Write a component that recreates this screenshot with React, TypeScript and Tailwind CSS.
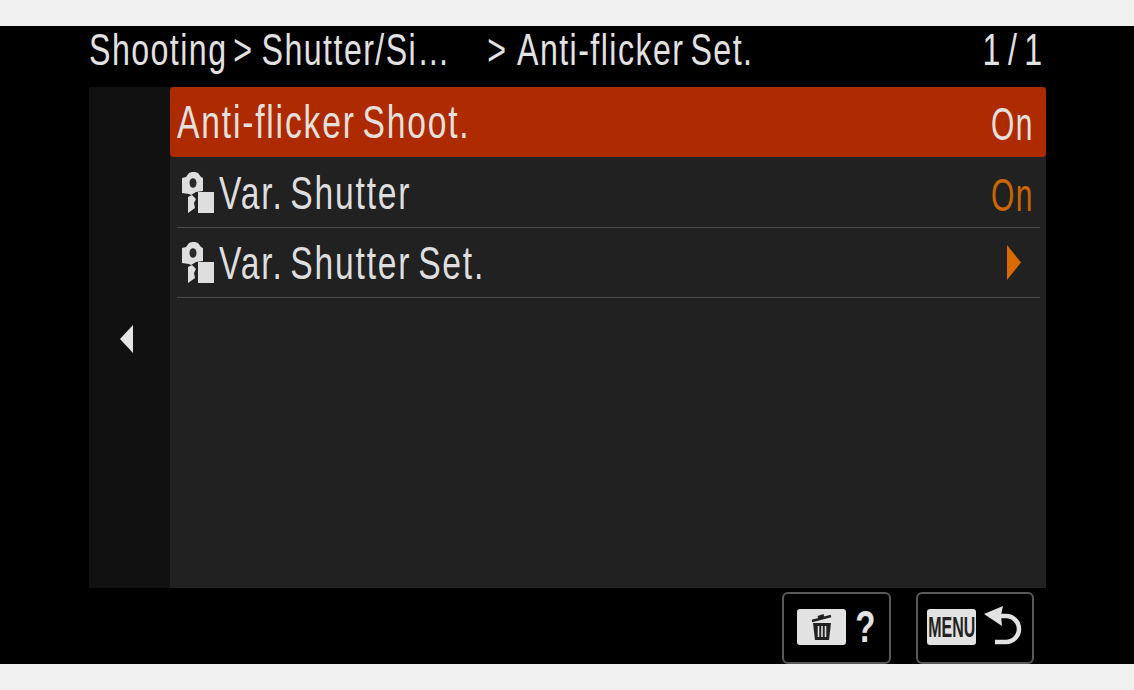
const font = "font-['Liberation_Sans',Arial,sans-serif]"
const rowText = 'text-[46px] leading-none inline-block scale-x-[0.73] tracking-[2.5px] [word-spacing:-6px] whitespace-nowrap'
const valueText = 'text-[46px] leading-none inline-block scale-x-[0.65] tracking-[2.3px] origin-right pt-[4px]'

function CameraFileIcon() {
  return (
    <svg width="34" height="42" viewBox="0 0 34 42" className="shrink-0">
      <path fill="#dedede" d="M1 6l4-1 3-4 3-1h3l3 1 3 4 2 1v13l-7 1-5 3-2-1-7-1z" />
      <ellipse cx="12" cy="11" rx="3.500" ry="4.800" fill="#2a2a2a" />
      <path fill="#dedede" d="M7 25l4-2 4 4-2 4 1 5-7 5z" />
      <path fill="#dedede" d="M17 20h16v21H17z" />
    </svg>
  )
}

function Row({ label, value, selected, icon, arrow }: { label: string; value?: string; selected?: boolean; icon?: boolean; arrow?: boolean }) {
  if (selected) {
    return (
      <div className="h-[70px] mb-px flex items-center justify-between bg-[#ae2a00] rounded-[4px] pl-[7px] pr-[12px] text-[#e4e0de]">
        <span className={`${rowText} origin-left`}>{label}</span>
        <span className={valueText}>{value}</span>
      </div>
    )
  }
  return (
    <div className="h-[70px] ml-[7px] mr-[6px] flex items-center justify-between border-b border-[#4a4a4a] pr-[6px]">
      <div className="flex items-center pl-[4px] gap-[4px] min-w-0">
        {icon && <CameraFileIcon />}
        <span className={`${rowText} origin-left pt-[1px] text-[#dedede]`}>{label}</span>
      </div>
      {value && <span className={`${valueText} text-[#cc6600]`}>{value}</span>}
      {arrow && (
        <svg width="15" height="35" viewBox="0 0 15 35" className="mr-[13px]">
          <path d="M1 0 15 17.500 1 35z" fill="#d96a00" />
        </svg>
      )}
    </div>
  )
}

export default function App() {
  return (
    <div className={`w-[1134px] h-[690px] bg-[#f0f0f0] pt-[26px] overflow-hidden ${font}`}>
      <div className="h-[638px] bg-black flex flex-col text-[#e2e2e2]">
        {/* breadcrumb */}
        <div className="h-[61px] shrink-0 ml-[89px] mr-[90px] pb-[14px] flex items-center justify-between">
          <div className="w-0 flex-1 text-[44px] leading-none flex origin-left scale-x-[0.73] tracking-[2px] [word-spacing:-6px] whitespace-nowrap">
            <span>Shooting</span>
            <span className="ml-[8px]">&gt;</span>
            <span className="ml-[11px]">Shutter/Si…</span>
            <span className="ml-[50px]">&gt;</span>
            <span className="ml-[13px]">Anti-flicker Set.</span>
          </div>
          <div className="text-[44px] leading-none inline-block origin-right scale-x-[0.73] tracking-[2px] [word-spacing:-6px] whitespace-nowrap">1 / 1</div>
        </div>

        {/* panel */}
        <div className="h-[501px] shrink-0 ml-[89px] w-[957px] flex">
          <div className="w-[81px] bg-[#111111] flex items-center justify-center pr-[7px] pt-[2px]">
            <svg width="13" height="28" viewBox="0 0 13 28">
              <path d="M13 0 0 14 13 28z" fill="#e4e4e4" />
            </svg>
          </div>
          <div className="flex-1 bg-[#212121]">
            <Row label="Anti-flicker Shoot." value="On" selected />
            <Row label="Var. Shutter" value="On" icon />
            <Row label="Var. Shutter Set." icon arrow />
          </div>
        </div>

        {/* soft keys */}
        <div className="flex-1 flex justify-end items-start pt-[4px] pr-[100px] gap-[25px]">
          <div className="w-[109px] h-[72px] border-2 border-[#5a5a5a] rounded-[6px] flex items-center pl-[13px] pb-[2px] gap-[6px]">
            <div className="w-[49px] h-[36px] bg-[#e2e2e2] rounded-[3px] flex items-center justify-center">
              <svg width="24" height="30" viewBox="0 0 24 30">
                <path d="M2 9 21 4" stroke="#222" strokeWidth="2.400" fill="none" />
                <path d="M8 5.500l6-2" stroke="#222" strokeWidth="3" fill="none" />
                <path d="M3 11h18l-2 17H5z" fill="#222" />
                <path d="M8.500 14v11M12 14v11M15.500 14v11" stroke="#e2e2e2" strokeWidth="1.600" />
              </svg>
            </div>
            <span className="text-[44px] leading-none font-bold inline-block scale-x-[0.75] text-[#e2e2e2]">?</span>
          </div>
          <div className="w-[118px] h-[72px] border-2 border-[#5a5a5a] rounded-[6px] flex items-center pl-[9px] pb-[2px] gap-[8px]">
            <div className="w-[49px] h-[36px] bg-[#e2e2e2] rounded-[3px] flex items-center justify-center overflow-hidden">
              <span className="text-[29px] leading-none font-bold text-[#222] inline-block scale-x-[0.55] whitespace-nowrap">MENU</span>
            </div>
            <svg width="38" height="42" viewBox="0 0 38 42">
              <path d="M0 8 19 0 17 9l1 11z" fill="#e2e2e2" />
              <path d="M15 10h7a13 13 0 0 1 0 26H11" stroke="#e2e2e2" strokeWidth="4.500" fill="none" />
            </svg>
          </div>
        </div>
      </div>
    </div>
  )
}
